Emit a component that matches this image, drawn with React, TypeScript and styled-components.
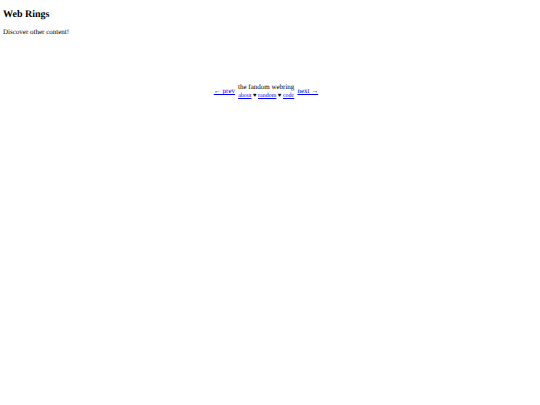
import styled, { createGlobalStyle } from "styled-components";


export default function App() {
    // render
    return (
        <>
            <GlobalStyle />
            <Wrapper>
                <Title>Web Rings</Title>
                <Intro>Discover other content!</Intro>
                <WebRing>
                    <RingLink href="#prev">← prev</RingLink>
                    <RingInfo>
                        <RingName>the fandom webring</RingName>
                        <RingMenu>
                            <RingLink href="#about">about</RingLink>
                            {" ♥ "}
                            <RingLink href="#random">random</RingLink>
                            {" ♥ "}
                            <RingLink href="#code">code</RingLink>
                        </RingMenu>
                    </RingInfo>
                    <RingLink href="#next">next →</RingLink>
                </WebRing>
            </Wrapper>
        </>
    );
}


const GlobalStyle = createGlobalStyle`
    body {
        margin: 0;
        background-color: #ffffff;
        color: #000000;
        font-family: "Liberation Serif", "Times New Roman", serif;
        font-size: 7px;
        line-height: 8px;
        text-rendering: geometricPrecision;
    }
`;

const Wrapper = styled.main`
    padding: 9px 11px 9px 3px;
`;

const Title = styled.h1`
    margin: 0;
    font-size: 10px;
    line-height: 12px;
    font-weight: bold;
`;

const Intro = styled.p`
    margin: 7px 0 0;
`;

const WebRing = styled.nav`
    display: flex;
    justify-content: center;
    align-items: center;
    gap: 3px;
    margin-top: 47px;
`;

const RingInfo = styled.div`
    text-align: center;
`;

const RingName = styled.div`
    line-height: 8px;
`;

const RingMenu = styled.div`
    margin-top: 2px;
    font-size: 6px;
    line-height: 6px;
`;

const RingLink = styled.a`
    color: #0000ee;
    text-decoration: underline;
`;
